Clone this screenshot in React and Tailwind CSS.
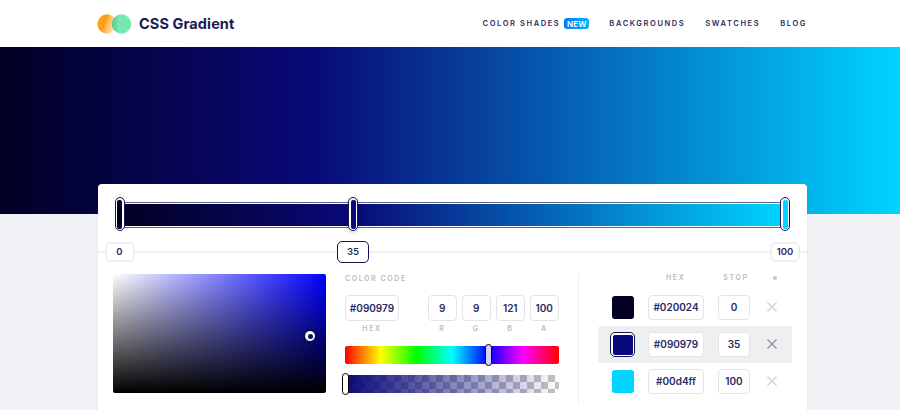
const navy = "text-[#2a2a60]";

function Logo() {
    return (
        <svg width="36" height="20" viewBox="0 0 36 20">
            <defs>
                <linearGradient id="lg-orange" x1="0" y1="0" x2="1" y2="0.35">
                    <stop offset="0" stopColor="#ffb40f" />
                    <stop offset="0.45" stopColor="#ff9a1c" />
                    <stop offset="0.7" stopColor="#ffc56a" />
                    <stop offset="1" stopColor="#ffe6b5" />
                </linearGradient>
                <linearGradient id="lg-green" x1="0" y1="0" x2="1" y2="0">
                    <stop offset="0" stopColor="#49c88c" />
                    <stop offset="0.4" stopColor="#6ce5ad" />
                    <stop offset="1" stopColor="#62eca6" />
                </linearGradient>
            </defs>
            <circle cx="10" cy="10" r="9.7" fill="url(#lg-orange)" />
            <circle cx="24.5" cy="10" r="9.7" fill="url(#lg-green)" opacity="0.92" />
        </svg>
    );
}

function Handle({ left, color, active }) {
    return (
        <div
            className={`absolute top-[-6px] h-[34px] w-[10px] -translate-x-1/2 rounded-[5px] border-[1.5px] border-[#14145a] bg-white p-[1.5px] ${active ? "shadow-[0_1px_4px_rgba(0,0,0,0.25)]" : ""}`}
            style={{ left }}
        >
            <div className="h-full w-full rounded-[2px]" style={{ background: color }} />
        </div>
    );
}

function StopChip({ left, value, active }) {
    return (
        <div
            className={`absolute top-1/2 flex -translate-x-1/2 -translate-y-1/2 items-center justify-center rounded-[5px] bg-white text-[9.5px] font-semibold ${navy} ${active ? "h-[22px] w-[32px] border-[1.5px] border-[#14145a]" : "h-[19px] w-[29px] border border-[#dfe0e5]"}`}
            style={{ left }}
        >
            {value}
        </div>
    );
}

function Field({ value, className = "" }) {
    return (
        <div className={`flex items-center justify-center rounded-[4px] border border-[#e3e4e8] bg-white text-[10px] font-semibold ${navy} ${className}`}>
            {value}
        </div>
    );
}

function Label({ children, className = "" }) {
    return <div className={`text-[7px] font-semibold uppercase tracking-[1.6px] text-[#b9bbc5] ${className}`}>{children}</div>;
}

function StopRow({ color, hex, stop, active }) {
    return (
        <div className={`ml-[-14px] flex h-[37px] w-[194px] items-center rounded-[3px] pl-[14px] ${active ? "bg-[#eeeff1]" : ""}`}>
            <div className="flex w-[36px] shrink-0 items-center">
                {active ? (
                    <div className="ml-[-2px] rounded-[5px] border-[1.5px] border-[#14145a] bg-white p-[1.5px]">
                        <div className="h-[20px] w-[20px] rounded-[2px]" style={{ background: color }} />
                    </div>
                ) : (
                    <div className="h-[23px] w-[22px] rounded-[3px]" style={{ background: color }} />
                )}
            </div>
            <Field value={hex} className="h-[25px] w-[56px] shrink-0" />
            <Field value={stop} className="ml-[14px] h-[25px] w-[32px] shrink-0" />
            <svg className="ml-[17px] mt-[-2px]" width="10" height="10" viewBox="0 0 10 10" stroke={active ? "#8f909c" : "#cfd0d6"} strokeWidth="1.2">
                <path d="M0.5 0.5 L9.5 9.5 M9.5 0.5 L0.5 9.5" />
            </svg>
        </div>
    );
}

export default function App() {
    return (
        <div className="h-[410px] w-[900px] overflow-hidden bg-[#f1f2f5] font-['Inter',sans-serif]">
            <header className="flex h-[47px] items-center justify-between bg-white pl-[97px] pr-[93px]">
                <div className="flex items-center gap-[6px]">
                    <Logo />
                    <span className="text-[14.5px] font-bold tracking-[0.1px] text-[#1a1a50]">CSS Gradient</span>
                </div>
                <nav className="flex items-center gap-[20px] text-[7.5px] font-semibold tracking-[1.6px] text-[#2d2d5f]">
                    <div className="flex items-center gap-[4px]">
                        <span>COLOR SHADES</span>
                        <span className="flex h-[11px] w-[25px] items-center justify-center rounded-[3px] bg-gradient-to-r from-[#0a7cf5] to-[#08b4fb] text-[8px] tracking-[0.2px] text-white">NEW</span>
                    </div>
                    <span>BACKGROUNDS</span>
                    <span>SWATCHES</span>
                    <span>BLOG</span>
                </nav>
            </header>

            <div className="h-[167px] bg-[linear-gradient(90deg,#020024_0%,#090979_35%,#00d4ff_100%)]" />

            <main className="ml-[98px] mt-[-30px] h-[300px] w-[709px] rounded-[4px] bg-white pt-[18px] shadow-[0_1px_3px_rgba(0,0,0,0.08)]">
                <div className="relative mx-[22px] h-[26px] border border-[#62627f] bg-white p-[1px]">
                    <div className="h-full bg-[linear-gradient(90deg,#020024_0%,#090979_35%,#00d4ff_100%)]" />
                    <Handle left="-1.5px" color="#020024" />
                    <Handle left="35%" color="#090979" active />
                    <Handle left="calc(100% + 1px)" color="#00d4ff" />
                </div>

                <div className="relative mt-[23px] h-[2px] bg-[#f1f2f4]">
                    <StopChip left="21.5px" value="0" />
                    <StopChip left="255px" value="35" active />
                    <StopChip left="687px" value="100" />
                </div>

                <div className="mt-[21px] flex pl-[15px]">
                    <div className="relative h-[119px] w-[213px] shrink-0 rounded-[2px] bg-[linear-gradient(to_top,#000,transparent),linear-gradient(to_right,#fff,#00f)]">
                        <div className="absolute left-[191px] top-[56px] h-[12px] w-[12px] rounded-full border-[1.5px] border-black bg-white p-[2.5px]">
                            <div className="h-full w-full rounded-full bg-[#090979]" />
                        </div>
                    </div>

                    <div className="ml-[19px] w-[214px] shrink-0">
                        <Label className="mt-[1px] leading-[8px]">Color code</Label>
                        <div className="mt-[12px] flex">
                            <div className="w-[56px]">
                                <Field value="#090979" className="h-[26px]" />
                                <Label className="mt-[4px] text-center leading-[8px]">Hex</Label>
                            </div>
                            <div className="ml-[28.5px] flex gap-[4.5px]">
                                {[["9", "R"], ["9", "G"], ["121", "B"], ["100", "A"]].map(([v, l]) => (
                                    <div key={l} className="w-[29.5px]">
                                        <Field value={v} className="h-[26px]" />
                                        <Label className="mt-[4px] text-center leading-[8px]">{l}</Label>
                                    </div>
                                ))}
                            </div>
                        </div>
                        <div className="relative mt-[13px] h-[18px] rounded-[2px] bg-[linear-gradient(to_right,#f00,#ff0,#0f0,#0ff,#00f,#f0f,#f00)]">
                            <div className="absolute left-[140px] top-[-2px] h-[22px] w-[7px] rounded-[4px] border border-black bg-[#d5d5f0]" />
                        </div>
                        <div className="relative mt-[11px] h-[18px] bg-[linear-gradient(to_right,#090979,transparent),repeating-conic-gradient(#c4c4c4_0_25%,#ffffff_0_50%)] bg-[size:100%_100%,14px_14px]">
                            <div className="absolute left-[-3px] top-[-2px] h-[22px] w-[7px] rounded-[4px] border border-black bg-white" />
                        </div>
                    </div>

                    <div className="ml-[19px] h-[130px] w-px shrink-0 bg-[#eeeff1]" />

                    <div className="ml-[33px] flex-1">
                        <div className="flex h-[8px] items-center">
                            <Label className="ml-[54px]">Hex</Label>
                            <Label className="ml-[38px]">Stop</Label>
                            <div className="ml-[24px] h-[4px] w-[4px] rounded-full bg-[#c5c6cf]" />
                        </div>
                        <div className="mt-[7px]">
                            <StopRow color="#020024" hex="#020024" stop="0" />
                            <StopRow color="#090979" hex="#090979" stop="35" active />
                            <StopRow color="#00d4ff" hex="#00d4ff" stop="100" />
                        </div>
                    </div>
                </div>
            </main>
        </div>
    );
}
